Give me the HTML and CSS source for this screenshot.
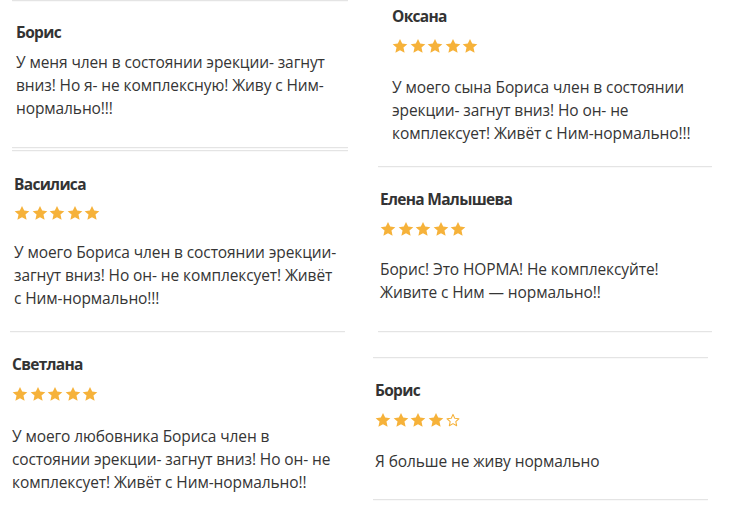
FILE: index.html
```html
<!DOCTYPE html>
<html lang="ru">
<head>
<meta charset="utf-8">
<link rel="stylesheet" href="styles.css">
<title>Отзывы</title>
</head>
<body>
<svg width="0" height="0" class="defs" aria-hidden="true">
  <defs>
    <symbol id="star" viewBox="0 0 24 24">
      <path d="M12 1.4l3.3 7 7.7.8-5.8 5.2 1.7 7.6L12 18.2 5.1 22l1.7-7.6L1 9.2l7.7-.8z"/>
    </symbol>
    <symbol id="star-o" viewBox="0 0 24 24">
      <path d="M12 3.6l2.6 5.8 6.3.7-4.7 4.3 1.3 6.2L12 17.4l-5.5 3.2 1.3-6.2-4.7-4.3 6.3-.7z" fill="none" stroke="currentColor" stroke-width="1.6" stroke-linejoin="round"/>
    </symbol>
  </defs>
</svg>
<main class="page">
  <section class="col col-left">
    <div class="rule rule-top"></div>
    <article class="review review-a">
      <h3 class="name">Борис</h3>
      <p class="text">У меня член в состоянии эрекции- загнут<br>вниз! Но я- не комплексную! Живу с Ним-<br>нормально!!!</p>
    </article>
    <div class="rule rule-double"></div>
    <div class="rule rule-double2"></div>
    <article class="review review-b">
      <h3 class="name">Василиса</h3>
      <div class="stars">
        <svg><use href="#star"/></svg><svg><use href="#star"/></svg><svg><use href="#star"/></svg><svg><use href="#star"/></svg><svg><use href="#star"/></svg>
      </div>
      <p class="text">У моего Бориса член в состоянии эрекции-<br>загнут вниз! Но он- не комплексует! Живёт<br>с Ним-нормально!!!</p>
    </article>
    <div class="rule rule-c"></div>
    <article class="review review-c">
      <h3 class="name">Светлана</h3>
      <div class="stars">
        <svg><use href="#star"/></svg><svg><use href="#star"/></svg><svg><use href="#star"/></svg><svg><use href="#star"/></svg><svg><use href="#star"/></svg>
      </div>
      <p class="text">У моего любовника Бориса член в<br>состоянии эрекции- загнут вниз! Но он- не<br>комплексует! Живёт с Ним-нормально!!</p>
    </article>
  </section>
  <section class="col col-right">
    <article class="review review-d">
      <h3 class="name">Оксана</h3>
      <div class="stars">
        <svg><use href="#star"/></svg><svg><use href="#star"/></svg><svg><use href="#star"/></svg><svg><use href="#star"/></svg><svg><use href="#star"/></svg>
      </div>
      <p class="text">У моего сына Бориса член в состоянии<br>эрекции- загнут вниз! Но он- не<br>комплексует! Живёт с Ним-нормально!!!</p>
    </article>
    <div class="rule rule-d"></div>
    <article class="review review-e">
      <h3 class="name">Елена Малышева</h3>
      <div class="stars">
        <svg><use href="#star"/></svg><svg><use href="#star"/></svg><svg><use href="#star"/></svg><svg><use href="#star"/></svg><svg><use href="#star"/></svg>
      </div>
      <p class="text">Борис! Это НОРМА! Не комплексуйте!<br>Живите с Ним — нормально!!</p>
    </article>
    <div class="rule rule-e"></div>
    <div class="rule rule-f"></div>
    <article class="review review-f">
      <h3 class="name">Борис</h3>
      <div class="stars">
        <svg><use href="#star"/></svg><svg><use href="#star"/></svg><svg><use href="#star"/></svg><svg><use href="#star"/></svg><svg class="empty"><use href="#star-o"/></svg>
      </div>
      <p class="text">Я больше не живу нормально</p>
    </article>
    <div class="rule rule-g"></div>
  </section>
</main>
</body>
</html>
```

FILE: styles.css
```css
html, body {
  margin: 0;
  padding: 0;
  background: #fff;
}
body {
  font-family: "Open Sans", "Noto Sans", sans-serif;
  color: #333;
  width: 730px;
  height: 509px;
  overflow: hidden;
}
.defs {
  position: absolute;
  width: 0;
  height: 0;
}
.page {
  display: flex;
}
.col {
  width: 365px;
  display: flex;
  flex-direction: column;
}
.rule {
  height: 1px;
  background: #e4e4e4;
  box-shadow: 0 1px 1px rgba(0,0,0,0.03);
}
.review {
  display: flex;
  flex-direction: column;
}
.name {
  margin: 0;
  font-size: 15.5px;
  line-height: 22px;
  font-weight: 700;
  color: #333;
  letter-spacing: -0.7px;
}
.stars {
  display: flex;
  gap: 1.5px;
  margin-top: 11px;
  height: 16px;
  color: #f6b23a;
}
.stars svg {
  width: 16px;
  height: 16px;
  fill: #f6b23a;
}
.stars svg.empty {
  fill: none;
  color: #f6b23a;
}
.text {
  margin: 22px 0 0;
  font-size: 15.5px;
  line-height: 23px;
  letter-spacing: -0.1px;
  color: #353535;
}

/* left column */
.rule-top { margin: 0 17px 0 12px; }
.review-a { padding: 20px 0 0 16px; }
.review-a .text { margin-top: 8px; }
.rule-double { margin: 27px 17px 0 12px; }
.rule-double2 { margin: 2px 17px 0 12px; }
.review-b { padding: 22px 0 0 14px; }
.review-b .stars { margin-top: 10px; }
.review-b .text { margin-top: 20px; }
.rule-c { margin: 21px 20px 0 10px; }
.review-c { padding: 21px 0 0 12px; }
.review-c .text { margin-top: 23px; }

/* right column */
.review-d { padding: 5px 0 0 27px; }
.review-d .text { margin-top: 22px; }
.rule-d { margin: 21px 18px 0 13px; }
.review-e { padding: 21px 0 0 15px; }
.review-e .text { margin-top: 21px; }
.rule-e { margin: 27px 18px 0 13px; }
.rule-f { margin: 25px 22px 0 8px; }
.review-f { padding: 21px 0 0 10px; }
.review-f .text { margin-top: 22px; }
.rule-g { margin: 26px 22px 0 8px; }
```
